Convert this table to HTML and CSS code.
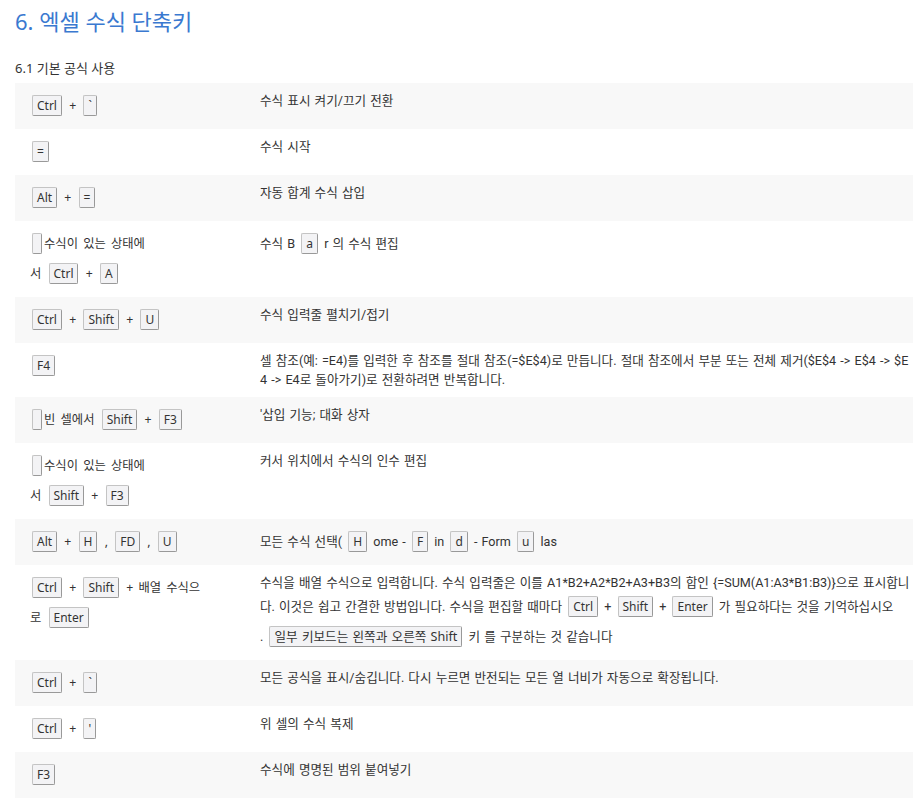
FILE: index.html
```html
<!DOCTYPE html>
<html lang="ko">
<head>
    <meta charset="UTF-8">
    <meta name="viewport" content="width=device-width, initial-scale=1.0">
    <title>엑셀 수식 단축키</title>
    <link rel="stylesheet" href="styles.css">
</head>
<body>
    <div class="page">
        <h1>6. 엑셀 수식 단축키</h1>

        <h2>6.1 기본 공식 사용</h2>
        <div class="table-wrap">
            <table class="shortcuts">
                <colgroup>
                    <col class="key-col">
                    <col>
                </colgroup>
                <tr>
                    <td class="keys"><kbd>Ctrl</kbd> + <kbd>`</kbd></td>
                    <td class="desc">수식 표시 켜기/끄기 전환</td>
                </tr>
                <tr>
                    <td class="keys"><kbd>=</kbd></td>
                    <td class="desc">수식 시작</td>
                </tr>
                <tr>
                    <td class="keys"><kbd>Alt</kbd> + <kbd>=</kbd></td>
                    <td class="desc">자동 합계 수식 삽입</td>
                </tr>
                <tr>
                    <td class="keys"><kbd>&#8203;</kbd>수식이 있는 상태에<br>서 <kbd>Ctrl</kbd> + <kbd>A</kbd></td>
                    <td class="desc">수식 B <kbd>a</kbd> r 의 수식 편집</td>
                </tr>
                <tr>
                    <td class="keys"><kbd>Ctrl</kbd> + <kbd>Shift</kbd> + <kbd>U</kbd></td>
                    <td class="desc">수식 입력줄 펼치기/접기</td>
                </tr>
                <tr>
                    <td class="keys"><kbd>F4</kbd></td>
                    <td class="desc">셀 참조(예: =E4)를 입력한 후 참조를 절대 참조(=$E$4)로 만듭니다. 절대 참조에서 부분 또는 전체 제거($E$4 -&gt; E$4 -&gt; $E<br>4 -&gt; E4로 돌아가기)로 전환하려면 반복합니다.</td>
                </tr>
                <tr>
                    <td class="keys"><kbd>&#8203;</kbd>빈 셀에서 <kbd>Shift</kbd> + <kbd>F3</kbd></td>
                    <td class="desc">'삽입 기능; 대화 상자</td>
                </tr>
                <tr>
                    <td class="keys"><kbd>&#8203;</kbd>수식이 있는 상태에<br>서 <kbd>Shift</kbd> + <kbd>F3</kbd></td>
                    <td class="desc">커서 위치에서 수식의 인수 편집</td>
                </tr>
                <tr>
                    <td class="keys"><kbd>Alt</kbd> + <kbd>H</kbd> , <kbd>FD</kbd> , <kbd>U</kbd></td>
                    <td class="desc">모든 수식 선택( <kbd>H</kbd> ome - <kbd>F</kbd> in <kbd>d</kbd> - Form <kbd>u</kbd> las</td>
                </tr>
                <tr>
                    <td class="keys"><kbd>Ctrl</kbd> + <kbd>Shift</kbd> + 배열 수식으<br>로 <kbd>Enter</kbd></td>
                    <td class="desc">수식을 배열 수식으로 입력합니다. 수식 입력줄은 이를 A1*B2+A2*B2+A3+B3의 합인 {=SUM(A1:A3*B1:B3)}으로 표시합니<br>다. 이것은 쉽고 간결한 방법입니다. 수식을 편집할 때마다 <kbd>Ctrl</kbd> + <kbd>Shift</kbd> + <kbd>Enter</kbd> 가 필요하다는 것을 기억하십시오<br>. <kbd class="wide">일부 키보드는 왼쪽과 오른쪽 Shift</kbd> 키 를 구분하는 것 같습니다</td>
                </tr>
                <tr>
                    <td class="keys"><kbd>Ctrl</kbd> + <kbd>`</kbd></td>
                    <td class="desc">모든 공식을 표시/숨깁니다. 다시 누르면 반전되는 모든 열 너비가 자동으로 확장됩니다.</td>
                </tr>
                <tr>
                    <td class="keys"><kbd>Ctrl</kbd> + <kbd>'</kbd></td>
                    <td class="desc">위 셀의 수식 복제</td>
                </tr>
                <tr>
                    <td class="keys"><kbd>F3</kbd></td>
                    <td class="desc">수식에 명명된 범위 붙여넣기</td>
                </tr>
            </table>
        </div>
    </div>
</body>
</html>
```

FILE: styles.css
```css
body {
    margin: 0;
    font-family: "Noto Sans", "Noto Sans CJK KR", sans-serif;
    color: #333;
    background: #fff;
}
.page {
    padding: 6px 7px 0 15px;
}
h1 {
    margin: 0;
    font-size: 22px;
    line-height: 30px;
    font-weight: normal;
    color: #3a79d0;
}
h2 {
    margin: 22px 0 5px;
    font-size: 13px;
    line-height: 20px;
    font-weight: normal;
    color: #333;
}
.table-wrap {
    overflow: hidden;
}
.shortcuts {
    width: 100%;
    border-collapse: collapse;
    table-layout: fixed;
    font-size: 12px;
}
.key-col {
    width: 225px;
}
.shortcuts tr:nth-child(odd) td {
    background: #f8f8f8;
}
.shortcuts td {
    vertical-align: top;
    padding: 8px 16px 8px 15px;
    line-height: 19px;
    white-space: nowrap;
}
.keys {
    font-size: 12.3px;
    word-spacing: 2px;
}
.shortcuts td.desc {
    padding-left: 20px;
    font-family: Roboto, "Noto Sans CJK KR", sans-serif;
    font-size: 12.6px;
    word-spacing: 1px;
}
kbd {
    display: inline-block;
    font-family: "Noto Sans", "Noto Sans CJK KR", sans-serif;
    font-size: 12px;
    line-height: 19px;
    padding: 0 4px;
    margin: 4px 2px 5px;
    border: 1px solid #c4c4c4;
    border-right-color: #999;
    border-bottom-color: #999;
    border-radius: 2px;
    background: #f3f3f5;
    color: #333;
    word-spacing: 0;
}
kbd.wide {
    font-size: 12.6px;
    word-spacing: 1px;
}
```
